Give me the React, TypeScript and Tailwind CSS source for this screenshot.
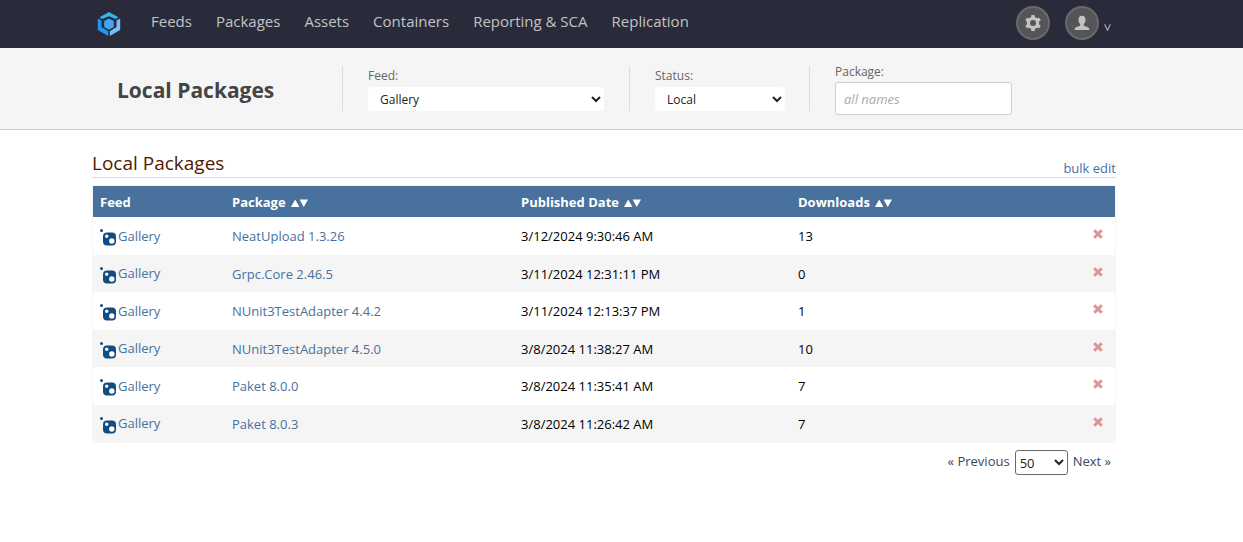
import React from "react";

type Row = { name: string; date: string; downloads: number };

const rows: Row[] = [
  { name: "NeatUpload 1.3.26", date: "3/12/2024 9:30:46 AM", downloads: 13 },
  { name: "Grpc.Core 2.46.5", date: "3/11/2024 12:31:11 PM", downloads: 0 },
  { name: "NUnit3TestAdapter 4.4.2", date: "3/11/2024 12:13:37 PM", downloads: 1 },
  { name: "NUnit3TestAdapter 4.5.0", date: "3/8/2024 11:38:27 AM", downloads: 10 },
  { name: "Paket 8.0.0", date: "3/8/2024 11:35:41 AM", downloads: 7 },
  { name: "Paket 8.0.3", date: "3/8/2024 11:26:42 AM", downloads: 7 },
];

const navItems = ["Feeds", "Packages", "Assets", "Containers", "Reporting & SCA", "Replication"];

function Logo() {
  return (
    <svg viewBox="0 0 24 24" className="size-6" aria-hidden="true">
      <path fill="#2fb4f5" d="M12 0 21.500 5.200 18.600 7 12 4.200 5.400 7 2.500 5.200Z" />
      <path fill="#2196f3" d="M.8 6.600 4.500 8.600V15L11.200 19.200V24L.8 18Z" />
      <path fill="#78bdf5" d="M23.200 6.600 19.500 8.600V15L12.800 19.200V24L23.200 18Z" />
      <path fill="#42a5f5" d="M12 6.400 16.800 9.100V14.900L12 17.700 7.200 14.900V9.100Z" />
    </svg>
  );
}

function Gear() {
  return (
    <svg viewBox="0 0 16 16" className="size-4" aria-hidden="true">
      <g fill="#c3c3c6">
        <rect x="6.200" y="0" width="3.600" height="16" rx=".6" />
        <rect x="6.200" y="0" width="3.600" height="16" rx=".6" transform="rotate(60 8 8)" />
        <rect x="6.200" y="0" width="3.600" height="16" rx=".6" transform="rotate(120 8 8)" />
        <circle cx="8" cy="8" r="6.200" />
      </g>
      <circle cx="8" cy="8" r="3" fill="#555557" />
    </svg>
  );
}

function Person() {
  return (
    <svg viewBox="0 0 16 16" className="size-4" aria-hidden="true">
      <path
        fill="#c3c3c6"
        d="M8 .8c2.300 0 3.500 1.600 3.500 4 0 1.900-.7 3.500-1.700 4.400v1.300c0 .6 4 1.300 5 2.400.4.500.6 1.200.6 2.100H.6c0-.9.2-1.600.6-2.100 1-1.100 5-1.800 5-2.400V9.200C5.200 8.300 4.500 6.700 4.500 4.800c0-2.400 1.200-4 3.500-4Z"
      />
    </svg>
  );
}

function FeedIcon() {
  return (
    <svg viewBox="0 0 17 17" className="mt-[2px] size-[17px] shrink-0" aria-hidden="true">
      <circle cx="1.500" cy="1.500" r="1.500" fill="#0f4c81" />
      <rect x="3" y="3.500" width="13" height="13" rx="4" fill="#0f4c81" />
      <circle cx="6.700" cy="7.300" r="1.700" fill="#fff" />
      <circle cx="11.800" cy="12" r="2.700" fill="#fff" />
    </svg>
  );
}

function Cross() {
  return (
    <svg viewBox="0 0 10 10" className="size-[10px]" aria-hidden="true">
      <path d="M1.200 1.200 8.800 8.800M8.800 1.200 1.200 8.800" stroke="#e09492" strokeWidth="3" />
    </svg>
  );
}

function SortArrows() {
  return (
    <svg viewBox="0 0 17 8" className="ml-[5px] inline-block h-2 w-[17px]" aria-hidden="true">
      <path fill="#fff" d="M0 8 4.200 .5 8.400 8ZM8.600 .5H17L12.800 8Z" />
    </svg>
  );
}

function SortableHeader({ label }: { label: string }) {
  return (
    <th scope="col" className="px-[7px] pt-[2px] text-left font-bold">
      <button type="button" className="cursor-pointer font-bold">
        {label}
        <SortArrows />
      </button>
    </th>
  );
}

export default function App() {
  return (
    <div className="min-h-screen bg-white font-['Open_Sans','Noto_Sans',sans-serif] text-[13px] text-black">
      <header className="flex h-12 items-center bg-[#292b3a] pr-[132px] pl-[97px] text-[#c3c3c6]">
        <a href="#" aria-label="Home" className="pb-px">
          <Logo />
        </a>
        <nav className="ml-[30px] flex flex-1 gap-6 pb-[5px] text-[15px] whitespace-nowrap">
          {navItems.map((item) => (
            <a key={item} href="#">
              {item}
            </a>
          ))}
        </nav>
        <div className="flex items-center gap-[15px] pb-[2px]">
          <button
            type="button"
            aria-label="Settings"
            className="flex size-[34px] items-center justify-center rounded-full border-2 border-[#6a6a6c] bg-[#555557]"
          >
            <Gear />
          </button>
          <button type="button" aria-label="Account" className="flex items-center gap-[5px]">
            <span className="flex size-[34px] items-center justify-center rounded-full border-2 border-[#6a6a6c] bg-[#555557]">
              <Person />
            </span>
            <svg viewBox="0 0 7 7" className="mt-2 size-[7px]" aria-hidden="true">
              <path d="M.6 .3 3.500 6.300 6.400 .3" fill="none" stroke="#a5a5ab" strokeWidth="1.200" />
            </svg>
          </button>
        </div>
      </header>

      <section className="flex h-[82px] items-start border-b border-[#cccccc] bg-[#f5f5f5] pt-[18px] pl-[117px] text-[12px] text-[#666666]">
        <h1 className="w-[225px] pt-2 text-[21px] leading-8 font-bold text-[#444444]">Local Packages</h1>
        <div className="flex h-[45px] w-[287px] flex-col border-l border-[#dddddd] pl-[25px]">
          <label htmlFor="feed" className="leading-5">
            Feed:
          </label>
          <select id="feed" className="mt-px h-6 w-[236px] shrink-0 rounded-sm bg-white pl-2 text-[12px] text-[#222222]">
            <option>Gallery</option>
          </select>
        </div>
        <div className="flex h-[45px] w-[180px] flex-col border-l border-[#dddddd] pl-[25px]">
          <label htmlFor="status" className="leading-5">
            Status:
          </label>
          <select id="status" className="mt-px h-6 w-[130px] shrink-0 rounded-sm bg-white pl-2 text-[12px] text-[#222222]">
            <option>Local</option>
          </select>
        </div>
        <div className="flex h-[45px] flex-col border-l border-[#dddddd] pl-[25px]">
          <label htmlFor="package" className="-mt-[3px] leading-[18px]">
            Package:
          </label>
          <input
            id="package"
            type="text"
            placeholder="all names"
            className="mt-px h-[33px] w-[177px] shrink-0 rounded-[3px] border border-[#cfcfd9] bg-white px-2 text-[13px] placeholder:text-[#aaaaaa] placeholder:italic"
          />
        </div>
      </section>

      <main className="pt-[18px] pr-[127px] pl-[92px]">
        <div className="flex h-[30px] items-end justify-between border-b border-[#dddddd]">
          <h2 className="text-[19px] leading-7 text-[#521900]">Local Packages</h2>
          <a href="#" className="leading-[18px] text-[#48719e]">
            bulk edit
          </a>
        </div>

        <table className="mt-[7px] w-full table-fixed border-separate border-spacing-0 border border-[#f5f5f5]">
          <colgroup>
            <col className="w-[132px]" />
            <col className="w-[289px]" />
            <col className="w-[277px]" />
            <col />
            <col className="w-9" />
          </colgroup>
          <thead>
            <tr className="h-[31px] bg-[#48719e] text-white">
              <th scope="col" className="px-[7px] pt-[2px] text-left font-bold">
                Feed
              </th>
              <SortableHeader label="Package" />
              <SortableHeader label="Published Date" />
              <SortableHeader label="Downloads" />
              <td />
            </tr>
          </thead>
          <tbody>
            {rows.map((row) => (
              <tr key={row.name} className="odd:h-[38px] even:h-[37px] even:bg-[#f5f5f5]">
                <td className="px-[7px]">
                  <a href="#" className="flex items-center gap-px pt-px text-[#48719e]">
                    <FeedIcon />
                    Gallery
                  </a>
                </td>
                <td className="px-[7px] pt-[2px]">
                  <a href="#" className="text-[#48719e]">
                    {row.name}
                  </a>
                </td>
                <td className="px-[7px] pt-[2px]">{row.date}</td>
                <td className="px-[7px] pt-[2px]">{row.downloads}</td>
                <td className="pr-3 pb-1">
                  <button type="button" aria-label={"Delete " + row.name} className="ml-auto block">
                    <Cross />
                  </button>
                </td>
              </tr>
            ))}
          </tbody>
        </table>

        <div className="mt-[7px] flex items-start justify-end gap-[5px] pr-[5px] text-[#34495e]">
          <a href="#" className="leading-[22px]">
            « Previous
          </a>
          <select
            aria-label="Rows per page"
            className="h-[25px] w-[53px] rounded-[3px] border border-[#6b6b78] bg-white text-[13px] text-[#222222]"
          >
            <option>50</option>
          </select>
          <a href="#" className="leading-[22px]">
            Next »
          </a>
        </div>
      </main>
    </div>
  );
}
